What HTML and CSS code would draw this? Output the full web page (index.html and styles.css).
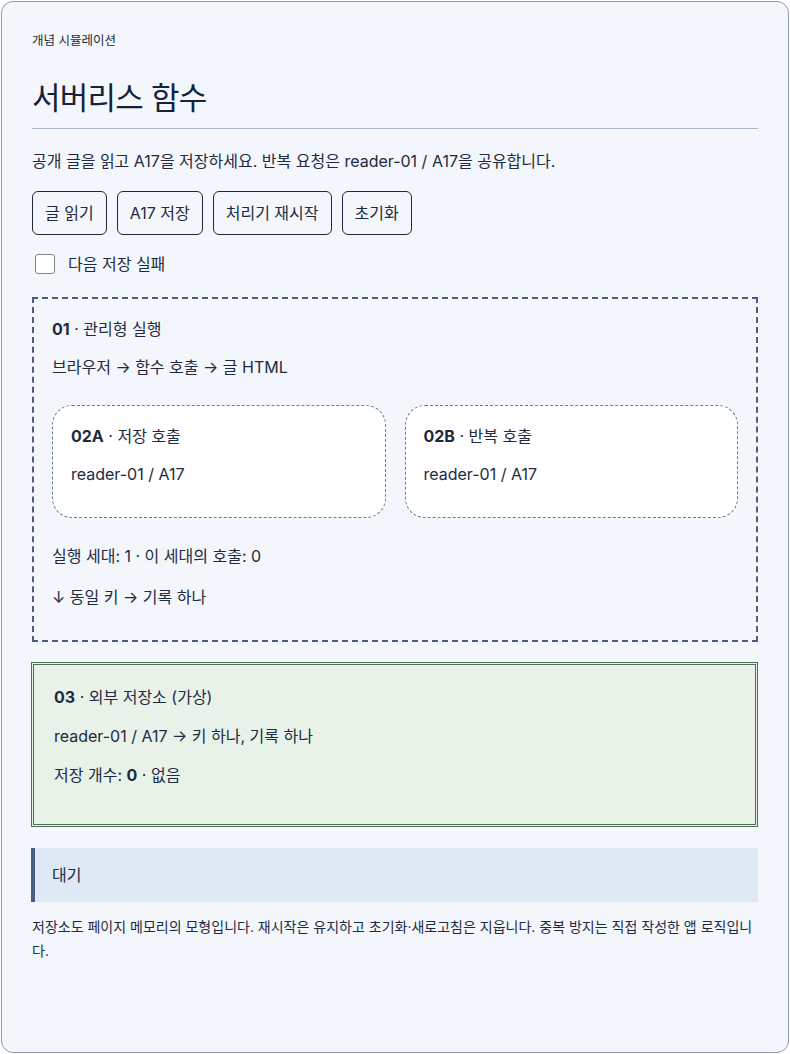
FILE: index.html
```html
<!DOCTYPE html>
<html lang="ko">
<head>
    <meta charset="UTF-8">
    <meta name="viewport" content="width=device-width, initial-scale=1.0">
    <title>서버리스 함수 - 개념 시뮬레이션</title>
    <link rel="stylesheet" href="styles.css">
</head>
<body>
    <main class="sim">
        <div class="eyebrow">개념 시뮬레이션</div>
        <h1>서버리스 함수</h1>
        <p class="lead">공개 글을 읽고 A17을 저장하세요. 반복 요청은 reader-01 / A17을 공유합니다.</p>

        <div class="actions">
            <button type="button">글 읽기</button>
            <button type="button">A17 저장</button>
            <button type="button">처리기 재시작</button>
            <button type="button">초기화</button>
        </div>

        <label class="toggle">
            <input type="checkbox" id="failNext">
            <span>다음 저장 실패</span>
        </label>

        <section class="runtime">
            <p><b>01</b> · 관리형 실행</p>
            <p>브라우저 → 함수 호출 → 글 HTML</p>
            <div class="calls">
                <div class="call">
                    <p><b>02A</b> · 저장 호출</p>
                    <p>reader-01 / A17</p>
                </div>
                <div class="call">
                    <p><b>02B</b> · 반복 호출</p>
                    <p>reader-01 / A17</p>
                </div>
            </div>
            <p>실행 세대: 1 · 이 세대의 호출: 0</p>
            <p class="flow">↓ 동일 키 → 기록 하나</p>
        </section>

        <section class="store">
            <p><b>03</b> · 외부 저장소 (가상)</p>
            <p>reader-01 / A17 → 키 하나, 기록 하나</p>
            <p>저장 개수: <b>0</b> · 없음</p>
        </section>

        <div class="status">대기</div>

        <p class="note">저장소도 페이지 메모리의 모형입니다. 재시작은 유지하고 초기화·새로고침은 지웁니다. 중복 방지는 직접 작성한 앱 로직입니다.</p>
    </main>
</body>
</html>
```

FILE: styles.css
```css
* {
    margin: 0;
    padding: 0;
    box-sizing: border-box;
}
html, body {
    background: #ffffff;
}
body {
    padding: 1px;
    font-family: Inter, "Noto Sans CJK KR", sans-serif;
    font-size: 16px;
    line-height: 24px;
    color: #1e2a42;
}
.sim {
    min-height: 1052px;
    background: #f3f6fb;
    border: 1px solid #8a9ab2;
    border-radius: 12px;
    padding: 30px 30px 40px;
}
.eyebrow {
    font-size: 12.5px;
    line-height: 18px;
    color: #1e2a42;
}
h1 {
    margin-top: 28px;
    padding-bottom: 14px;
    border-bottom: 1px solid #a9b8cf;
    font-family: "Noto Sans CJK KR", sans-serif;
    font-size: 31px;
    font-weight: 400;
    line-height: 36px;
    letter-spacing: -0.025em;
    color: #16223a;
}
.lead {
    margin-top: 20px;
}
.actions {
    display: flex;
    gap: 10px;
    margin-top: 18px;
}
button {
    height: 44px;
    padding: 0 12px;
    background: transparent;
    border: 1px solid #1e2a42;
    border-radius: 6px;
    font: inherit;
    color: #1e2a42;
    cursor: pointer;
}
.toggle {
    display: flex;
    align-items: center;
    gap: 13px;
    margin-top: 17px;
    padding-left: 3px;
}
.toggle input {
    appearance: none;
    width: 20px;
    height: 20px;
    background: #ffffff;
    border: 1px solid #7c828c;
    border-radius: 3px;
}
.runtime {
    margin-top: 21px;
    padding: 18px 18px 17px;
    border: 2px dashed #4a5d82;
}
.runtime p,
.store p,
.call p {
    margin-bottom: 14px;
}
.runtime .flow {
    margin-top: 17px;
}
.calls {
    display: grid;
    grid-template-columns: 1fr 1fr;
    gap: 19px;
    margin: 26px 0;
}
.call {
    padding: 18px 18px 17px;
    background: #ffffff;
    border: 1px dashed #6c7a94;
    border-radius: 20px;
}
.store {
    margin-top: 20px;
    margin-left: -1px;
    padding: 20px 20px 22px;
    background: #e8f2e9;
    border: 3px double #4f6e52;
}
.store p {
    margin-bottom: 15px;
}
.status {
    margin-top: 21px;
    margin-left: -1px;
    padding: 15px 17px;
    background: #dfe9f6;
    border-left: 4px solid #4a5d82;
}
.note {
    margin-top: 13px;
    font-size: 14px;
    line-height: 24px;
}
```
